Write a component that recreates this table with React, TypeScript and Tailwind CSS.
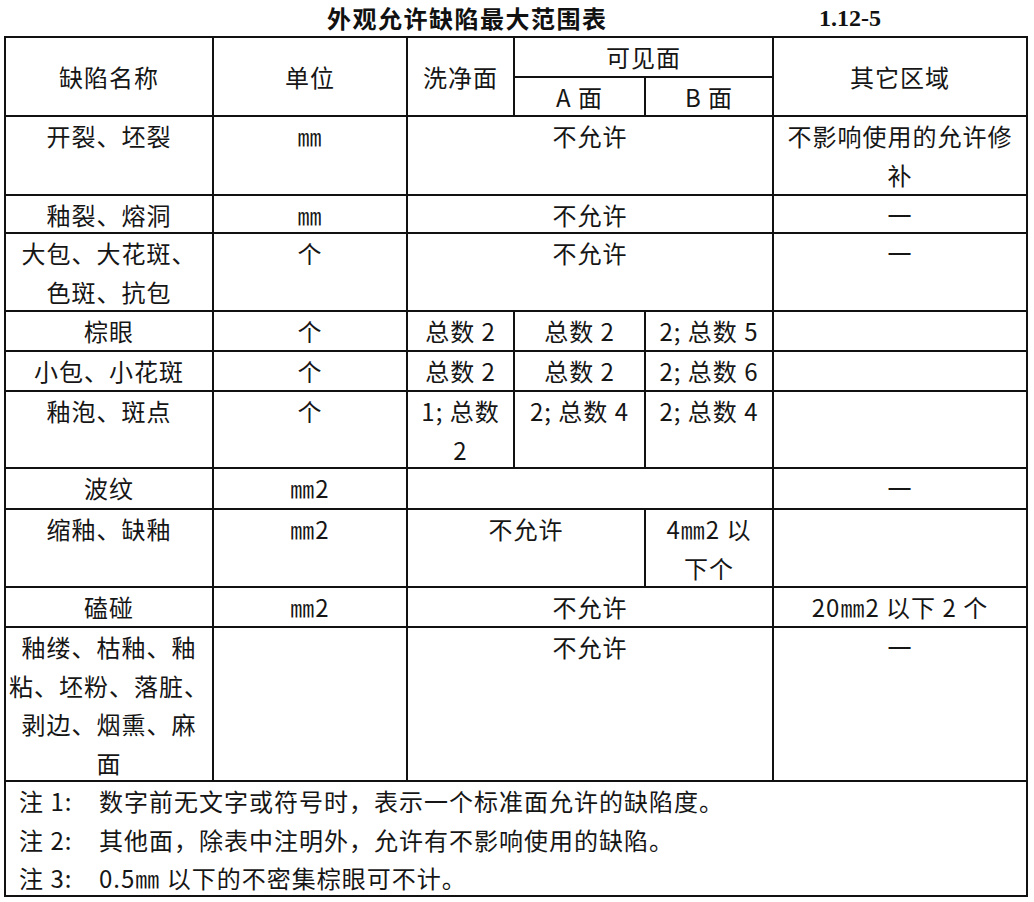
import React from "react";

const font = "font-['Noto_Sans_CJK_SC','Noto_Sans',sans-serif]";
const body = "bg-white text-center leading-[38.5px]";
const head = "bg-white flex items-center justify-center text-center";

export default function App() {
  return (
    <div className={`w-[1034px] h-[902px] bg-white text-[#161616] ${font} text-[24px] tracking-[1px]`}>
      <div className="h-[36px] flex items-center">
        <div className="ml-[327px] w-[492px] font-bold tracking-[1.5px] text-[#111]">外观允许缺陷最大范围表</div>
        <div className="font-['Liberation_Serif',serif] font-bold text-[24px] tracking-normal text-[#111]">1.12-5</div>
      </div>
      <div className="ml-[4px] w-[1024px] bg-[#111] p-[2px] grid gap-[2px] grid-cols-[206px_192px_105px_129px_126px_252px] grid-rows-[38px_37px_77px_36px_76px_38px_38px_75px_39px_76px_38px_152px_113px]">
        {/* header */}
        <div className={`${head} row-span-2`}>缺陷名称</div>
        <div className={`${head} row-span-2`}>单位</div>
        <div className={`${head} row-span-2`}>洗净面</div>
        <div className={`${head} col-span-2`}>可见面</div>
        <div className={`${head} row-span-2`}>其它区域</div>
        <div className={head}>A 面</div>
        <div className={head}>B 面</div>

        {/* 开裂 */}
        <div className={body}>开裂、坯裂</div>
        <div className={body}>㎜</div>
        <div className={`${body} col-span-3`}>不允许</div>
        <div className={body}>
          不影响使用的允许修
          <br />补
        </div>

        {/* 釉裂 */}
        <div className={body}>釉裂、熔洞</div>
        <div className={body}>㎜</div>
        <div className={`${body} col-span-3`}>不允许</div>
        <div className={body}>一</div>

        {/* 大包 */}
        <div className={body}>
          大包、大花斑、
          <br />色斑、抗包
        </div>
        <div className={body}>个</div>
        <div className={`${body} col-span-3`}>不允许</div>
        <div className={body}>一</div>

        {/* 棕眼 */}
        <div className={body}>棕眼</div>
        <div className={body}>个</div>
        <div className={body}>总数 2</div>
        <div className={body}>总数 2</div>
        <div className={body}>2; 总数 5</div>
        <div className={body}></div>

        {/* 小包 */}
        <div className={body}>小包、小花斑</div>
        <div className={body}>个</div>
        <div className={body}>总数 2</div>
        <div className={body}>总数 2</div>
        <div className={body}>2; 总数 6</div>
        <div className={body}></div>

        {/* 釉泡 */}
        <div className={body}>釉泡、斑点</div>
        <div className={body}>个</div>
        <div className={body}>
          1; 总数
          <br />2
        </div>
        <div className={body}>2; 总数 4</div>
        <div className={body}>2; 总数 4</div>
        <div className={body}></div>

        {/* 波纹 */}
        <div className={body}>波纹</div>
        <div className={body}>㎜2</div>
        <div className={`${body} col-span-3`}></div>
        <div className={body}>一</div>

        {/* 缩釉 */}
        <div className={body}>缩釉、缺釉</div>
        <div className={body}>㎜2</div>
        <div className={`${body} col-span-2`}>不允许</div>
        <div className={body}>
          4㎜2 以
          <br />下个
        </div>
        <div className={body}></div>

        {/* 磕碰 */}
        <div className={body}>磕碰</div>
        <div className={body}>㎜2</div>
        <div className={`${body} col-span-3`}>不允许</div>
        <div className={body}>20㎜2 以下 2 个</div>

        {/* 釉缕 */}
        <div className={body}>
          釉缕、枯釉、釉
          <br />粘、坯粉、落脏、
          <br />剥边、烟熏、麻
          <br />面
        </div>
        <div className={body}></div>
        <div className={`${body} col-span-3`}>不允许</div>
        <div className={body}>一</div>

        {/* notes */}
        <div className="bg-white col-span-6 pl-[13px] leading-[38.5px] flex flex-col">
          <div className="flex">
            <span className="w-[80px] shrink-0">注 1:</span>
            <span>数字前无文字或符号时，表示一个标准面允许的缺陷度。</span>
          </div>
          <div className="flex">
            <span className="w-[80px] shrink-0">注 2:</span>
            <span>其他面，除表中注明外，允许有不影响使用的缺陷。</span>
          </div>
          <div className="flex">
            <span className="w-[80px] shrink-0">注 3:</span>
            <span>0.5㎜ 以下的不密集棕眼可不计。</span>
          </div>
        </div>
      </div>
    </div>
  );
}
